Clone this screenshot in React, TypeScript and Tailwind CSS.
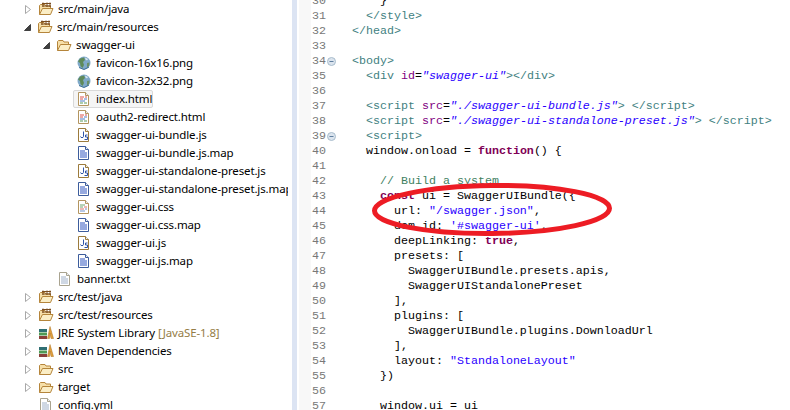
import type { ReactNode } from "react";

type IconKind = "pkg" | "folder" | "globe" | "html" | "js" | "map" | "css" | "txt" | "lib";

const Collapsed = () => (
  <svg width="6" height="9" viewBox="0 0 6 9" className="shrink-0">
    <path d="M.5.5 5.5 4.5.5 8.5Z" fill="#fff" stroke="#a8a8a8" />
  </svg>
);

const Expanded = () => (
  <svg width="7" height="7" viewBox="0 0 7 7" className="shrink-0">
    <path d="M6.5.5V6.5H.5Z" fill="#404040" stroke="#404040" />
  </svg>
);

function FolderShape() {
  return (
    <>
      <path d="M1.5 13.5V4.5L2.5 3.5H7L8 5H12.5V7" fill="#f6dfa8" stroke="#b5853b" />
      <path d="M1.5 13.5 4.5 7.5H15L12.5 13.5Z" fill="#fbeec6" stroke="#b5853b" />
    </>
  );
}

function FileShape({ border, children }: { border: string; children: ReactNode }) {
  return (
    <>
      <path d="M2.5 1.5H9.5L12.5 4.5V14.5H2.5Z" fill="#fff" stroke={border} />
      <path d="M9.5 1.5V4.5H12.5" fill="#e8edf5" stroke={border} />
      {children}
    </>
  );
}

function TreeIcon({ kind }: { kind: IconKind }) {
  return (
    <svg width="16" height="16" viewBox="0 0 16 16" className="shrink-0">
      {kind === "folder" && <FolderShape />}
      {kind === "pkg" && (
        <>
          <FolderShape />
          <path d="M5 6V1.5M9 6V1.5M12 6V1.5M4 2.5H13M4 5H13" stroke="#7a4c1e" fill="none" />
        </>
      )}
      {kind === "globe" && (
        <>
          <circle cx="8" cy="8" r="6.5" fill="#7fa9c9" />
          <path d="M4 3.5 8 2.5 9 5 7 7 8 10 6.5 13 4.5 11 4 8 2 6.5Z" fill="#5f8a5a" />
          <path d="M11 8 13.5 7.5 13 11 11 12.5Z" fill="#6b8f68" />
          <path d="M9 2.5 12 4 11 5.5 9.5 4.5Z" fill="#dbe8f2" />
          <path d="M3 12.5 8 14.5 13 12" fill="none" stroke="#3f6f96" />
        </>
      )}
      {kind === "html" && (
        <FileShape border="#b39560">
          <path d="M4 6H8M9 6H11M4 8H7" stroke="#d9534f" />
          <path d="M8 8H11M4 10H9" stroke="#4f7fc8" />
          <path d="M4 12H7M8 12H11" stroke="#5a9a5a" />
        </FileShape>
      )}
      {kind === "css" && (
        <FileShape border="#b39560">
          <path d="M4 6H9M4 8H7" stroke="#6fa56f" />
          <path d="M8 8H11M4 10H8" stroke="#d9706b" />
          <path d="M9 10H11M4 12H9" stroke="#6f8fc8" />
        </FileShape>
      )}
      {kind === "js" && (
        <FileShape border="#9c7b3c">
          <path d="M7.5 4.5V9.5C7.5 11 4.5 11 4.5 9.5" fill="none" stroke="#2f55a8" />
          <path d="M11.5 8H9.5V10H11.5V12.5H8.5" fill="none" stroke="#2f55a8" />
        </FileShape>
      )}
      {kind === "map" && (
        <FileShape border="#3c5c9c">
          <path d="M4 6H9M4 8H11M4 10H11M4 12H11" stroke="#2f55c0" />
        </FileShape>
      )}
      {kind === "txt" && (
        <FileShape border="#a9a38f">
          <path d="M4 6H9M4 8H11M4 10H11M4 12H11" stroke="#9fb0c8" />
        </FileShape>
      )}
      {kind === "lib" && (
        <>
          <path d="M1 4H9V7H1Z" fill="#2f6f73" />
          <path d="M1 7.5H9V10.5H1Z" fill="#4f9a55" />
          <path d="M1 11H9V14H1Z" fill="#8a3f3a" />
          <path d="M9.5 13.5 12 1.5 15.5 13.5H13L12 8 11.5 13.5Z" fill="#e3a13c" stroke="#a86f1e" strokeWidth=".5" />
        </>
      )}
    </svg>
  );
}

type TreeRow = {
  label: string;
  icon: IconKind;
  pad: string;
  arrow?: "open" | "closed";
  note?: string;
  selected?: boolean;
};

const rows: TreeRow[] = [
  { label: "src/main/java", icon: "pkg", pad: "pl-[25px]", arrow: "closed" },
  { label: "src/main/resources", icon: "pkg", pad: "pl-[24px]", arrow: "open" },
  { label: "swagger-ui", icon: "folder", pad: "pl-[43px]", arrow: "open" },
  { label: "favicon-16x16.png", icon: "globe", pad: "pl-[76px]" },
  { label: "favicon-32x32.png", icon: "globe", pad: "pl-[76px]" },
  { label: "index.html", icon: "html", pad: "pl-[73px]", selected: true },
  { label: "oauth2-redirect.html", icon: "html", pad: "pl-[76px]" },
  { label: "swagger-ui-bundle.js", icon: "js", pad: "pl-[76px]" },
  { label: "swagger-ui-bundle.js.map", icon: "map", pad: "pl-[76px]" },
  { label: "swagger-ui-standalone-preset.js", icon: "js", pad: "pl-[76px]" },
  { label: "swagger-ui-standalone-preset.js.map", icon: "map", pad: "pl-[76px]" },
  { label: "swagger-ui.css", icon: "css", pad: "pl-[76px]" },
  { label: "swagger-ui.css.map", icon: "map", pad: "pl-[76px]" },
  { label: "swagger-ui.js", icon: "js", pad: "pl-[76px]" },
  { label: "swagger-ui.js.map", icon: "map", pad: "pl-[76px]" },
  { label: "banner.txt", icon: "txt", pad: "pl-[57px]" },
  { label: "src/test/java", icon: "pkg", pad: "pl-[25px]", arrow: "closed" },
  { label: "src/test/resources", icon: "pkg", pad: "pl-[25px]", arrow: "closed" },
  { label: "JRE System Library", icon: "lib", pad: "pl-[25px]", arrow: "closed", note: "[JavaSE-1.8]" },
  { label: "Maven Dependencies", icon: "lib", pad: "pl-[25px]", arrow: "closed" },
  { label: "src", icon: "folder", pad: "pl-[25px]", arrow: "closed" },
  { label: "target", icon: "folder", pad: "pl-[25px]", arrow: "closed" },
  { label: "config.yml", icon: "txt", pad: "pl-[38px]" },
];

function Row({ row }: { row: TreeRow }) {
  return (
    <div className={`flex h-[18px] shrink-0 items-center ${row.pad}`}>
      {row.arrow && (
        <div className="flex w-[13px] shrink-0 justify-start">
          {row.arrow === "open" ? <Expanded /> : <Collapsed />}
        </div>
      )}
      {row.selected ? (
        <div className="flex h-[18px] w-[80px] items-center gap-[4px] rounded-[2px] border border-[#d9d9d9] bg-[#f5f5f5] pl-[2px]">
          <TreeIcon kind={row.icon} />
          <span className="whitespace-pre">{row.label}</span>
        </div>
      ) : (
        <>
          <TreeIcon kind={row.icon} />
          <span className="ml-[4px] whitespace-pre">
            {row.label}
            {row.note && <span className="text-[#957d47]"> {row.note}</span>}
          </span>
        </>
      )}
    </div>
  );
}

const TAG = "text-[#3f7f7f]";
const ATTR = "text-[#7f007f]";
const STR_I = "text-[#2a00ff] italic";
const STR = "text-[#2a00ff]";
const KW = "text-[#7f0055] font-bold";
const NOTE = "text-[#3f7f5f]";

type Seg = [string, string?];

const code: { n: number; fold?: boolean; segs: Seg[] }[] = [
  { n: 30, segs: [["      }"]] },
  { n: 31, segs: [["    </style>", TAG]] },
  { n: 32, segs: [["  </head>", TAG]] },
  { n: 33, segs: [] },
  { n: 34, fold: true, segs: [["  <body>", TAG]] },
  { n: 35, segs: [["    <div ", TAG], ["id", ATTR], ["="], ['"swagger-ui"', STR_I], ["></div>", TAG]] },
  { n: 36, segs: [] },
  { n: 37, segs: [["    <script ", TAG], ["src", ATTR], ["="], ['"./swagger-ui-bundle.js"', STR_I], ["> </script>", TAG]] },
  { n: 38, segs: [["    <script ", TAG], ["src", ATTR], ["="], ['"./swagger-ui-standalone-preset.js"', STR_I], ["> </script>", TAG]] },
  { n: 39, fold: true, segs: [["    <script>", TAG]] },
  { n: 40, segs: [["    window.onload = "], ["function", KW], ["() {"]] },
  { n: 41, segs: [] },
  { n: 42, segs: [["      // Build a system", NOTE]] },
  { n: 43, segs: [["      "], ["const", KW], [" ui = SwaggerUIBundle({"]] },
  { n: 44, segs: [["        url: "], ['"/swagger.json"', STR], [","]] },
  { n: 45, segs: [["        dom_id: "], ["'#swagger-ui'", STR], [","]] },
  { n: 46, segs: [["        deepLinking: "], ["true", KW], [","]] },
  { n: 47, segs: [["        presets: ["]] },
  { n: 48, segs: [["          SwaggerUIBundle.presets.apis,"]] },
  { n: 49, segs: [["          SwaggerUIStandalonePreset"]] },
  { n: 50, segs: [["        ],"]] },
  { n: 51, segs: [["        plugins: ["]] },
  { n: 52, segs: [["          SwaggerUIBundle.plugins.DownloadUrl"]] },
  { n: 53, segs: [["        ],"]] },
  { n: 54, segs: [["        layout: "], ['"StandaloneLayout"', STR]] },
  { n: 55, segs: [["      })"]] },
  { n: 56, segs: [] },
  { n: 57, segs: [["      window.ui = ui"]] },
];

export default function App() {
  return (
    <div className="relative flex h-[410px] w-[790px] overflow-hidden bg-white text-black">
      <div className="flex h-full w-[288px] shrink-0 flex-col overflow-hidden font-['Noto_Sans',sans-serif] text-[11.5px] tracking-[-0.13px]">
        {rows.map((r) => (
          <Row key={r.label} row={r} />
        ))}
      </div>
      <div className="ml-[4px] h-full w-[5px] shrink-0 bg-[#dce4f3]" />
      <div className="ml-[2px] h-full w-[12px] shrink-0 bg-[#f8f8f8]" />
      <div className="-mt-[6px] flex-1 font-['Liberation_Mono',monospace] text-[11.67px] leading-[15px]">
        {code.map((line) => (
          <div key={line.n} className="flex h-[15px]">
            <span className="ml-px w-[14px] shrink-0 text-[#787878]">{line.n}</span>
            <span className="flex w-[12px] shrink-0 items-center pl-[1px]">
              {line.fold && (
                <svg width="9" height="9" viewBox="0 0 9 9">
                  <circle cx="4.5" cy="4.5" r="4" fill="#dbe4ee" stroke="#a9bccd" />
                  <path d="M2.5 4.5H6.5" stroke="#5f7f9f" />
                </svg>
              )}
            </span>
            <span className="whitespace-pre">
              {line.segs.map(([text, cls], i) => (
                <span key={i} className={cls}>
                  {text}
                </span>
              ))}
            </span>
          </div>
        ))}
      </div>
      <svg width="790" height="410" viewBox="0 0 790 410" className="pointer-events-none absolute left-0 top-0">
        <ellipse cx="492" cy="209.5" rx="117.5" ry="24" transform="rotate(-0.6 492 209.5)" fill="none" stroke="#ed1c24" strokeWidth="5" />
      </svg>
    </div>
  );
}
